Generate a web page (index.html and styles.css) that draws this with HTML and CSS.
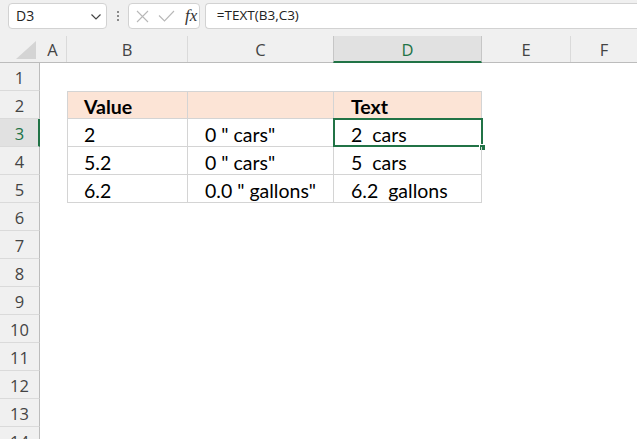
FILE: index.html
```html
<!DOCTYPE html>
<html>
<head>
<meta charset="utf-8">
<link rel="stylesheet" href="styles.css">
</head>
<body>
<div class="app">
  <div class="fbar">
    <div class="namebox">
      <span class="ref">D3</span>
      <svg class="chev" width="10" height="6" viewBox="0 0 10 6"><polyline points="0.5,0.5 5,5 9.5,0.5" fill="none" stroke="#444" stroke-width="1.2"/></svg>
    </div>
    <div class="sep"><i></i><i></i><i></i></div>
    <div class="fxbox">
      <svg class="ico" width="13" height="13" viewBox="0 0 13 13"><path d="M1 1 L12 12 M12 1 L1 12" stroke="#b8b8b8" stroke-width="1.1" fill="none"/></svg>
      <svg class="ico" width="17" height="12" viewBox="0 0 17 12"><polyline points="1,5.5 6.5,11 16,1" stroke="#b8b8b8" stroke-width="1.1" fill="none"/></svg>
      <span class="fx">fx</span>
    </div>
    <div class="formula">=TEXT(B3,C3)</div>
  </div>

  <div class="colheads">
    <div class="corner"><svg width="40" height="26" viewBox="0 0 40 26"><polygon points="16,23 36,23 36,5" fill="#d4d4d4"/></svg></div>
    <div class="ch w-a">A</div>
    <div class="ch w-b">B</div>
    <div class="ch w-c">C</div>
    <div class="ch w-d active">D</div>
    <div class="ch w-e">E</div>
    <div class="ch w-f">F</div>
  </div>

  <div class="rows">
    <div class="row"><div class="rh">1</div></div>
    <div class="row">
      <div class="rh">2</div>
      <div class="gap w-a"></div>
      <div class="cell w-b th first top">Value</div>
      <div class="cell w-c th top"></div>
      <div class="cell w-d th top">Text</div>
    </div>
    <div class="row">
      <div class="rh active">3</div>
      <div class="gap w-a"></div>
      <div class="cell w-b first">2</div>
      <div class="cell w-c">0 " cars"</div>
      <div class="cell w-d selected">2&nbsp; cars<span class="sel"></span><span class="handle"></span></div>
    </div>
    <div class="row">
      <div class="rh">4</div>
      <div class="gap w-a"></div>
      <div class="cell w-b first">5.2</div>
      <div class="cell w-c">0 " cars"</div>
      <div class="cell w-d">5&nbsp; cars</div>
    </div>
    <div class="row">
      <div class="rh">5</div>
      <div class="gap w-a"></div>
      <div class="cell w-b first">6.2</div>
      <div class="cell w-c">0.0 " gallons"</div>
      <div class="cell w-d">6.2&nbsp; gallons</div>
    </div>
    <div class="row"><div class="rh">6</div></div>
    <div class="row"><div class="rh">7</div></div>
    <div class="row"><div class="rh">8</div></div>
    <div class="row"><div class="rh">9</div></div>
    <div class="row"><div class="rh">10</div></div>
    <div class="row"><div class="rh">11</div></div>
    <div class="row"><div class="rh">12</div></div>
    <div class="row"><div class="rh">13</div></div>
    <div class="row"><div class="rh">14</div></div>
  </div>
</div>
</body>
</html>
```

FILE: styles.css
```css
* { box-sizing: border-box; }
html, body { margin: 0; padding: 0; }
body {
  width: 637px;
  height: 439px;
  overflow: hidden;
  background: #ffffff;
}
.app {
  width: 637px;
  height: 439px;
  overflow: hidden;
  background: #ffffff;
}

/* formula bar */
.fbar {
  height: 36px;
  background: #f0f0f0;
  display: flex;
  align-items: flex-start;
  padding: 3px 0 0 8px;
  font-family: "Open Sans", "Noto Sans", sans-serif;
  font-size: 13.5px;
  color: #222;
  white-space: nowrap;
}
.namebox {
  width: 101px;
  height: 26px;
  background: #fff;
  border: 1px solid #d2d2d2;
  border-radius: 4px;
  display: flex;
  align-items: center;
  justify-content: space-between;
  padding: 0 5px 0 7px;
}
.ref { line-height: 1; padding-bottom: 1px; font-size: 14px; }
.chev { margin-top: 1px; }
.sep {
  width: 21px;
  height: 26px;
  display: flex;
  flex-direction: column;
  align-items: center;
  justify-content: center;
  gap: 2px;
}
.sep i {
  display: block;
  width: 2px;
  height: 2px;
  background: #8a8a8a;
}
.fxbox {
  width: 73px;
  height: 26px;
  background: #fff;
  border: 1px solid #d2d2d2;
  border-radius: 4px;
  display: flex;
  align-items: center;
  padding: 0 0 0 7px;
  gap: 9px;
}
.fx {
  font-family: "Liberation Serif", "DejaVu Serif", serif;
  font-style: italic;
  font-size: 17px;
  color: #333;
  margin-left: 1px;
  line-height: 1;
  padding-bottom: 2px;
}
.formula {
  margin-left: 5px;
  width: 440px;
  height: 26px;
  background: #fff;
  border: 1px solid #d2d2d2;
  border-right: none;
  border-radius: 4px 0 0 4px;
  padding: 0 0 0 11px;
  display: flex;
  align-items: center;
  line-height: 1;
  padding-bottom: 1px;
}

/* widths */
.w-a { width: 27px; }
.w-b { width: 121px; }
.w-c { width: 146px; }
.w-d { width: 148px; }
.w-e { width: 89px; }
.w-f { width: 67px; }

/* column headers */
.colheads {
  height: 27px;
  display: flex;
  background: #f0f0f0;
  border-bottom: 1px solid #bcbcbc;
  font-family: "Open Sans", "Noto Sans", sans-serif;
  font-size: 16.5px;
  color: #444;
}
.corner {
  width: 40px;
  height: 26px;
  flex: none;
}
.corner svg { display: block; }
.ch {
  flex: none;
  height: 26px;
  display: flex;
  align-items: center;
  justify-content: center;
  border-right: 1px solid #dadada;
  padding-top: 1px;
}
.ch.w-a { width: 28px; margin-left: -1px; }
.ch.active {
  background: #e1e1e1;
  border-left: 1px solid #c6c6c6;
  border-right: 1px solid #c6c6c6;
  border-bottom: 2px solid #217346;
  color: #217346;
  height: 27px;
  margin-left: -1px;
  padding-top: 2px;
}
.ch.w-d { width: 149px; }

/* rows */
.row {
  height: 28px;
  display: flex;
}
.rh {
  flex: none;
  width: 40px;
  height: 28px;
  background: #f0f0f0;
  border-right: 1px solid #bcbcbc;
  border-bottom: 1px solid #dadada;
  display: flex;
  align-items: center;
  justify-content: center;
  font-family: "Open Sans", "Noto Sans", sans-serif;
  font-size: 16.5px;
  color: #444;
  padding-top: 1px;
}
.rh.active {
  background: #e1e1e1;
  border-right: 2px solid #217346;
  color: #217346;
  padding-left: 1px;
}
.gap { flex: none; }
.cell {
  flex: none;
  height: 28px;
  position: relative;
  border-right: 1px solid #d4d4d4;
  border-bottom: 1px solid #d4d4d4;
  display: flex;
  align-items: center;
  padding: 3px 0 0 17px;
  font-family: "Lato", "Liberation Sans", sans-serif;
  font-size: 19.5px;
  color: #000;
  white-space: nowrap;
}
.cell.first { border-left: 1px solid #d4d4d4; padding-left: 16px; }
.cell.top { border-top: 1px solid #d4d4d4; padding-top: 2px; }
.cell.th {
  background: #fce4d6;
  font-weight: bold;
}
.sel {
  position: absolute;
  left: -1px;
  top: -1px;
  right: -2px;
  bottom: -1px;
  border: 2px solid #217346;
}
.handle {
  position: absolute;
  right: -5px;
  bottom: -5px;
  width: 7px;
  height: 7px;
  background: #217346;
  border: 1px solid #fff;
}
```
